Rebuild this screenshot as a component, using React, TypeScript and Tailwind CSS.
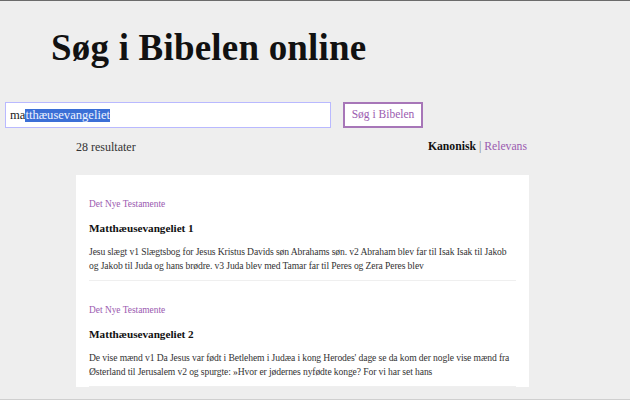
import React from 'react'

const serif = { fontFamily: '"Liberation Serif", "DejaVu Serif", serif' }

const results = [
  {
    book: 'Det Nye Testamente',
    title: 'Matthæusevangeliet 1',
    text: 'Jesu slægt v1 Slægtsbog for Jesus Kristus Davids søn Abrahams søn. v2 Abraham blev far til Isak Isak til Jakob og Jakob til Juda og hans brødre. v3 Juda blev med Tamar far til Peres og Zera Peres blev',
  },
  {
    book: 'Det Nye Testamente',
    title: 'Matthæusevangeliet 2',
    text: 'De vise mænd v1 Da Jesus var født i Betlehem i Judæa i kong Herodes\' dage se da kom der nogle vise mænd fra Østerland til Jerusalem v2 og spurgte: »Hvor er jødernes nyfødte konge? For vi har set hans',
  },
]

export default function App() {
  return (
    <div className="h-[400px] overflow-hidden bg-[#eeeeee] border-t border-[#6b6b6b] border-b border-b-[#cfcfcf] text-[#222]" style={serif}>
      {/* Heading */}
      <h1 className="pl-[51px] pt-[25px] text-[37px] leading-[44px] font-bold text-[#111] tracking-[0.2px]">
        Søg i Bibelen online
      </h1>

      {/* Search row */}
      <div className="flex items-center gap-[12px] pl-[5px] mt-[32px]">
        <div className="w-[326px] h-[26px] bg-white border border-[#b9b9ff] flex items-center px-[4px] text-[12.6px] text-[#222]">
          <span>ma</span>
          <span className="bg-[#3b6fd6] text-[#eef2ff] leading-[13px]">tthæusevangeliet</span>
        </div>
        <button className="w-[80px] h-[26px] bg-white border-2 border-[#a776b8] text-[11.5px] text-[#9b5bb0]">
          Søg i Bibelen
        </button>
      </div>

      {/* Meta row */}
      <div className="flex justify-between items-center w-[451px] ml-[76px] mt-[11px] text-[12px] leading-[16px]">
        <span className="text-[#333]">28 resultater</span>
        <span className="text-[11.7px]">
          <span className="font-bold text-[#111]">Kanonisk</span>
          <span className="text-[#777]"> | </span>
          <span className="text-[#9b5bb0]">Relevans</span>
        </span>
      </div>

      {/* Results card */}
      <div className="w-[453px] ml-[76px] mt-[20px] bg-white px-[13px] pt-[22px]">
        {results.map((r) => (
          <div key={r.title} className="pb-[7px] border-b border-[#efefef] mb-[22px]">
            <p className="text-[9.4px] leading-[14px] text-[#9b5bb0]">{r.book}</p>
            <h2 className="mt-[9px] text-[11.2px] leading-[16px] font-bold text-[#111]">{r.title}</h2>
            <p className="mt-[9px] text-[9.6px] leading-[14px] tracking-[-0.1px] text-[#333]">{r.text}</p>
          </div>
        ))}
      </div>
    </div>
  )
}
